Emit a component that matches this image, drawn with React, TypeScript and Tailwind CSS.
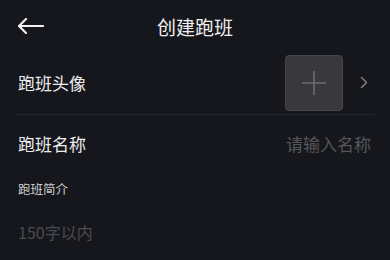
export default function App() {
  const font = { fontFamily: '"Noto Sans CJK SC", "Noto Sans", sans-serif' };
  return (
    <div className="w-[390px] h-[260px] bg-[#16171c] overflow-hidden" style={font}>
      {/* header */}
      <div className="relative flex items-center justify-center h-[52px]">
        <svg className="absolute left-[17px] top-[18px]" width="27" height="16" viewBox="0 0 27 16" fill="none">
          <path d="M26 8H2M9 1L2 8l7 7" stroke="#f2f2f2" strokeWidth="2.2" strokeLinecap="round" strokeLinejoin="round" />
        </svg>
        <span className="text-[19px] text-[#f0f0f0] leading-none">创建跑班</span>
      </div>

      {/* avatar row */}
      <div className="flex items-center h-[64px] pr-[7px] mx-[15px] -mt-px border-b border-[#25262b]">
        <span className="pl-[3px] text-[17px] text-[#ededed] leading-none flex-1">跑班头像</span>
        <div className="w-[58px] h-[56px] rounded-[4px] bg-[#39393d] border border-[#44454a] flex items-center justify-center">
          <svg width="28" height="28" viewBox="0 0 28 28">
            <path d="M14 2v24M2 14h24" stroke="#6b6b70" strokeWidth="1.6" />
          </svg>
        </div>
        <svg className="ml-[17px]" width="8" height="13" viewBox="0 0 8 13" fill="none">
          <path d="M1.5 1.5l5 5-5 5" stroke="#7a7a7f" strokeWidth="1.6" strokeLinecap="round" strokeLinejoin="round" />
        </svg>
      </div>

      {/* name row */}
      <div className="flex items-center h-[56px] pl-[18px] pr-[19px]">
        <span className="text-[17px] text-[#ededed] leading-none flex-1">跑班名称</span>
        <span className="text-[17px] text-[#55565b] leading-none">请输入名称</span>
      </div>

      {/* intro */}
      <div className="pl-[18px] pt-[12px]">
        <div className="text-[12.5px] text-[#cfcfd0] leading-none">跑班简介</div>
        <div className="text-[16px] text-[#4a4b50] leading-none mt-[28px]">150字以内</div>
      </div>
    </div>
  );
}
